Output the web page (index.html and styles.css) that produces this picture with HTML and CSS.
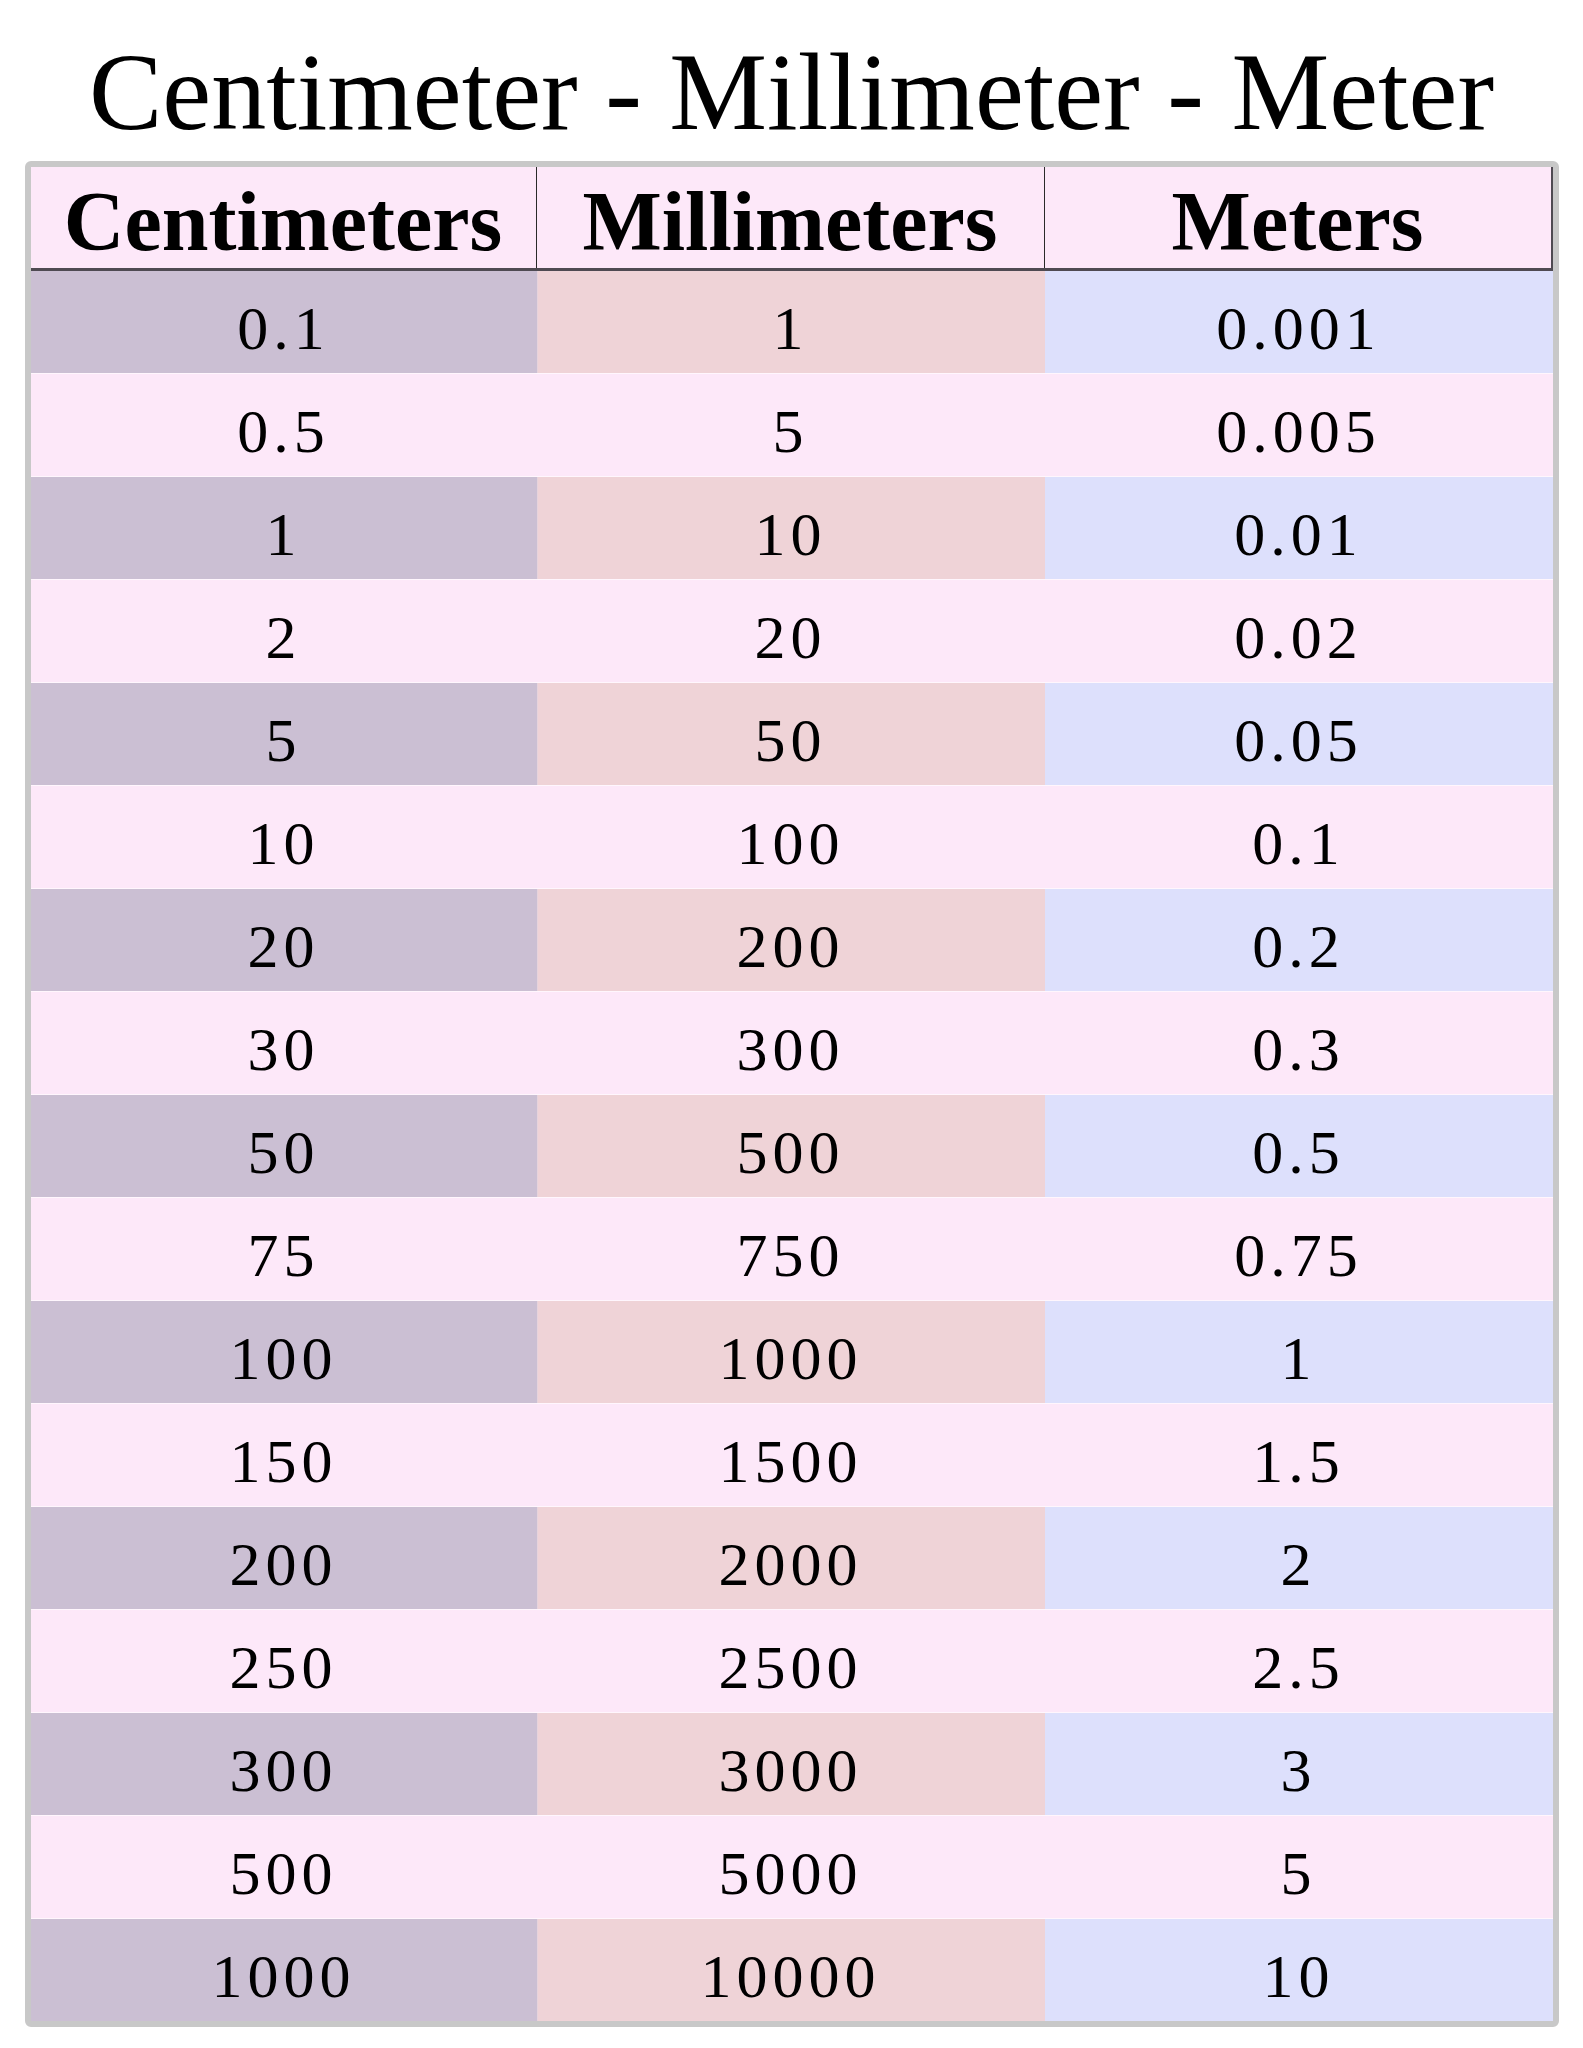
FILE: index.html
```html
<!DOCTYPE html>
<html lang="en">
<head>
<meta charset="utf-8">
<title>Centimeter - Millimeter - Meter</title>
<link rel="stylesheet" href="styles.css">
</head>
<body>
<h1 class="title">Centimeter - Millimeter - Meter</h1>
<div class="frame">
  <div class="row head">
    <div class="cell">Centimeters</div>
    <div class="cell">Millimeters</div>
    <div class="cell">Meters</div>
  </div>
  <div class="row tint"><div class="cell">0.1</div><div class="cell">1</div><div class="cell">0.001</div></div>
  <div class="row"><div class="cell">0.5</div><div class="cell">5</div><div class="cell">0.005</div></div>
  <div class="row tint"><div class="cell">1</div><div class="cell">10</div><div class="cell">0.01</div></div>
  <div class="row"><div class="cell">2</div><div class="cell">20</div><div class="cell">0.02</div></div>
  <div class="row tint"><div class="cell">5</div><div class="cell">50</div><div class="cell">0.05</div></div>
  <div class="row"><div class="cell">10</div><div class="cell">100</div><div class="cell">0.1</div></div>
  <div class="row tint"><div class="cell">20</div><div class="cell">200</div><div class="cell">0.2</div></div>
  <div class="row"><div class="cell">30</div><div class="cell">300</div><div class="cell">0.3</div></div>
  <div class="row tint"><div class="cell">50</div><div class="cell">500</div><div class="cell">0.5</div></div>
  <div class="row"><div class="cell">75</div><div class="cell">750</div><div class="cell">0.75</div></div>
  <div class="row tint"><div class="cell">100</div><div class="cell">1000</div><div class="cell">1</div></div>
  <div class="row"><div class="cell">150</div><div class="cell">1500</div><div class="cell">1.5</div></div>
  <div class="row tint"><div class="cell">200</div><div class="cell">2000</div><div class="cell">2</div></div>
  <div class="row"><div class="cell">250</div><div class="cell">2500</div><div class="cell">2.5</div></div>
  <div class="row tint"><div class="cell">300</div><div class="cell">3000</div><div class="cell">3</div></div>
  <div class="row"><div class="cell">500</div><div class="cell">5000</div><div class="cell">5</div></div>
  <div class="row tint"><div class="cell">1000</div><div class="cell">10000</div><div class="cell">10</div></div>
</div>
</body>
</html>
```
FILE: styles.css
```css
html, body {
  margin: 0;
  padding: 0;
  background: #ffffff;
}

body {
  font-family: "Liberation Serif", "Times New Roman", serif;
  color: #000000;
}

.title {
  margin: 0 0 14px;
  padding-top: 38px;
  font-size: 110px;
  line-height: 109px;
  font-weight: normal;
  text-align: center;
  white-space: nowrap;
}

.frame {
  width: 1522px;
  margin: 0 auto;
  border: 6px solid #c8c8c8;
  border-radius: 6px;
  background: #fde8f9;
}

.row {
  display: grid;
  grid-template-columns: 506px 508px 508px;
  background: #fde8f9;
}

.row + .row {
  border-top: 1px solid #fff6fd;
}

.head + .row {
  border-top: none;
}

.cell {
  height: 90px;
  padding-top: 12px;
  line-height: 90px;
  font-size: 62px;
  letter-spacing: 5px;
  text-align: center;
  white-space: nowrap;
}

.head {
  border-bottom: 3px solid #4f4a52;
}

.head .cell {
  height: 93px;
  padding-top: 8px;
  line-height: 93px;
  font-size: 84px;
  font-weight: bold;
  letter-spacing: 0;
  border-right: 1px solid #2a2a2a;
}

.head .cell:last-child {
  border-right: 2px solid #4f4a52;
}

.tint .cell:nth-child(1) {
  background: #cbbfd3;
}

.tint .cell:nth-child(2) {
  background: #efd3d7;
  box-shadow: inset 1px 0 0 #e6d3dc;
}

.tint .cell:nth-child(3) {
  background: #dde0fc;
}
```
